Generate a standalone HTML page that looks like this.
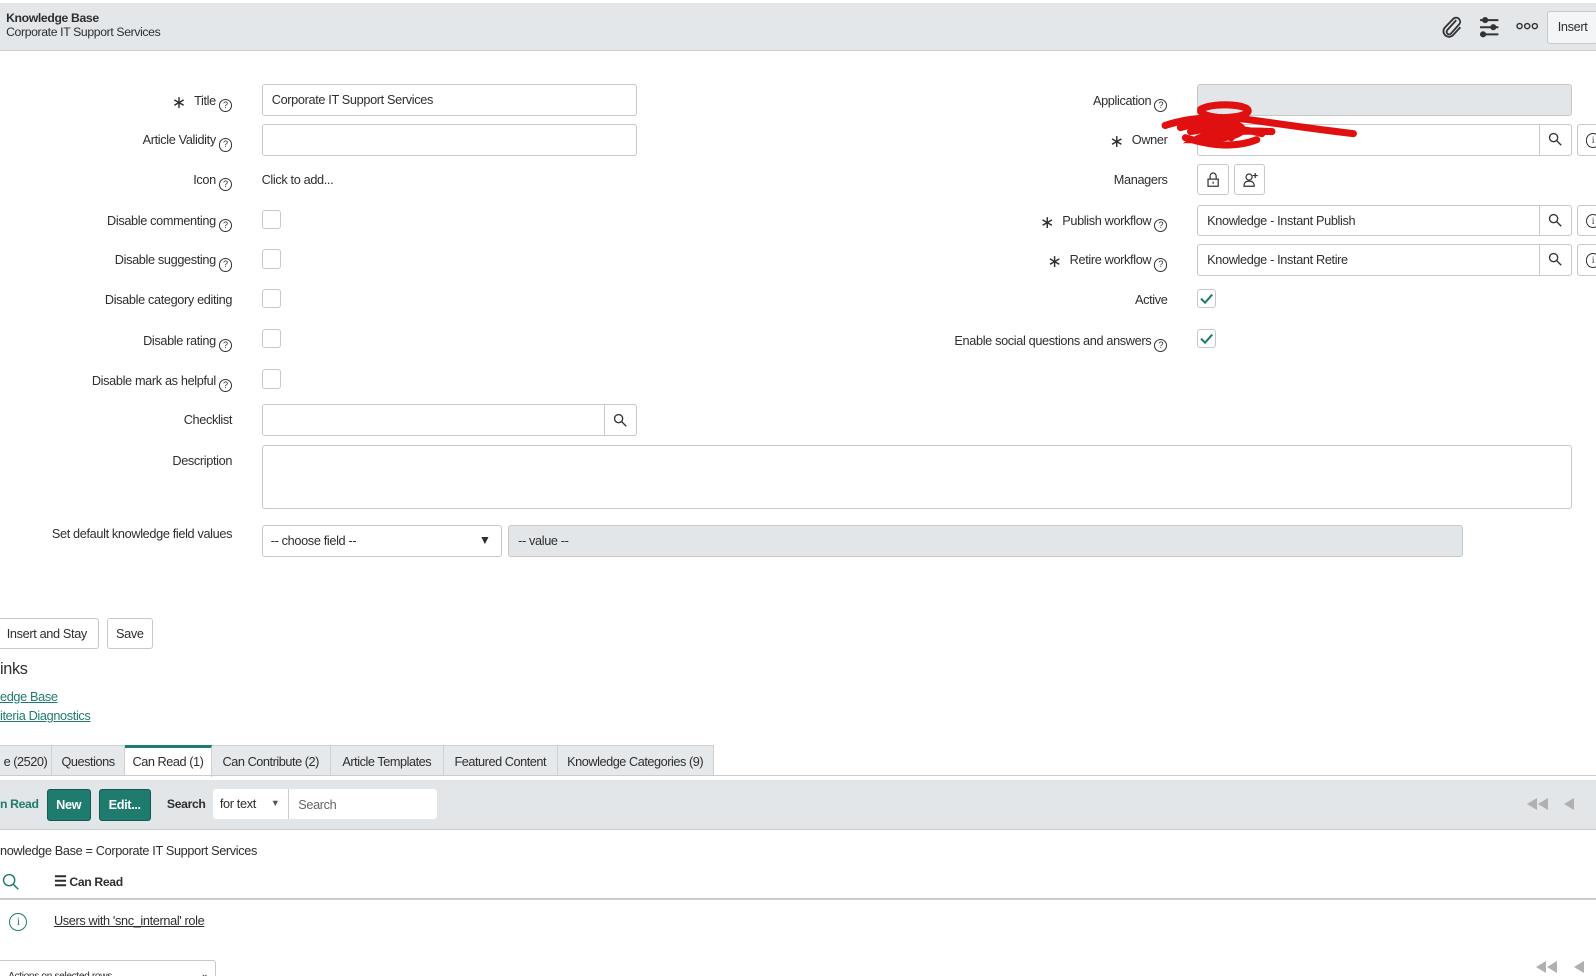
<!DOCTYPE html>
<html><head><meta charset="utf-8"><style>
html,body{margin:0;padding:0;background:#fff;overflow:hidden}
body{width:1568px;height:959px;zoom:1.01786;position:relative;font-family:"Liberation Sans",sans-serif;font-size:12.5px;letter-spacing:-0.35px;color:#2e2e2e}
.a{position:absolute}
.lbl{position:absolute;right:1340px;white-space:nowrap;text-align:right}
.rl{position:absolute;right:421px;white-space:nowrap;text-align:right}
.q{display:inline-block;width:11px;height:11px;border:1px solid #333;border-radius:50%;font-size:9px;line-height:11px;text-align:center;margin-left:3px;vertical-align:-3px;letter-spacing:0}
.inp{position:absolute;border:1px solid #c8c8c8;border-radius:3px;background:#fff;box-sizing:border-box;padding-left:9px;line-height:29px}
.cb{position:absolute;width:19px;height:19px;border:1px solid #c8c8c8;border-radius:3px;box-sizing:border-box;background:#fff}
.star{font-size:17px;margin-right:8px;vertical-align:-3px;font-family:"DejaVu Sans",sans-serif}
.btn{position:absolute;border:1px solid #c8c8c8;border-radius:3px;background:#fff;box-sizing:border-box;text-align:center}
.tab{position:absolute;top:732px;height:29px;line-height:31px;background:#e6e9eb;border-right:1px solid #d0d0d0;border-top:1px solid #d0d0d0;box-sizing:border-box;text-align:center;white-space:nowrap;font-size:12.5px;letter-spacing:-0.45px}
.teal{background:#1f7b6e;color:#fff;font-weight:bold;border-radius:3px;border:1px solid #14594f;box-sizing:border-box;text-align:center;line-height:29px}
.ib{position:absolute;width:12px;height:12px;border:1px solid #333;border-radius:50%;font-size:9px;text-align:center;line-height:12px;font-family:"Liberation Serif",serif}
.tri{position:absolute;width:0;height:0;border-top:6px solid transparent;border-bottom:6px solid transparent;border-right:10px solid #b0b0b0}
</style></head><body>
<div class="a" style="left:0;top:3px;width:1568px;height:46px;background:#e4e7ea;border-bottom:1px solid #c9cbcd"></div>
<div class="a" style="left:6px;top:11px;font-weight:bold;font-size:12px">Knowledge Base</div>
<div class="a" style="left:6px;top:25px;font-size:12px">Corporate IT Support Services</div>
<svg class="a" style="left:1415px;top:15px" width="24" height="24" viewBox="0 0 24 24"><path d="M16 5 L7 15 a2.5 2.5 0 0 0 3.5 3.5 L19 9 a4 4 0 0 0-5.6-5.6 L5 12 a5.5 5.5 0 0 0 7.8 7.8 L20 12" fill="none" stroke="#333" stroke-width="1.8"/></svg>
<svg class="a" style="left:1451px;top:15px" width="24" height="24" viewBox="0 0 24 24" stroke="#333" stroke-width="2"><path d="M3 5H21M3 12H21M3 19H21"/><circle cx="8" cy="5" r="2" fill="#333"/><circle cx="16" cy="12" r="2" fill="#333"/><circle cx="6" cy="19" r="2" fill="#333"/></svg>
<svg class="a" style="left:1489px;top:22px" width="22" height="8" viewBox="0 0 22 8" fill="none" stroke="#333" stroke-width="1.4"><circle cx="3.5" cy="4" r="2.5"/><circle cx="11" cy="4" r="2.5"/><circle cx="18.5" cy="4" r="2.5"/></svg>
<div class="btn" style="left:1520px;top:11px;width:50px;height:32px;line-height:30px;background:#f4f5f6">Insert</div>

<div class="lbl" style="top:91px"><span class="star">∗</span>Title<span class="q">?</span></div>
<div class="inp" style="left:257px;top:83px;width:369px;height:31px">Corporate IT Support Services</div>
<div class="lbl" style="top:130px">Article Validity<span class="q">?</span></div>
<div class="inp" style="left:257px;top:122px;width:369px;height:31px"></div>
<div class="lbl" style="top:169px">Icon<span class="q">?</span></div>
<div class="a" style="left:257px;top:169px">Click to add...</div>
<div class="lbl" style="top:209px">Disable commenting<span class="q">?</span></div>
<div class="cb" style="left:257px;top:206px"></div>
<div class="lbl" style="top:248px">Disable suggesting<span class="q">?</span></div>
<div class="cb" style="left:257px;top:245px"></div>
<div class="lbl" style="top:287px">Disable category editing</div>
<div class="cb" style="left:257px;top:284px"></div>
<div class="lbl" style="top:327px">Disable rating<span class="q">?</span></div>
<div class="cb" style="left:257px;top:323px"></div>
<div class="lbl" style="top:366px">Disable mark as helpful<span class="q">?</span></div>
<div class="cb" style="left:257px;top:363px"></div>
<div class="lbl" style="top:405px">Checklist</div>
<div class="inp" style="left:257px;top:397px;width:369px;height:31px"></div>
<div class="a" style="left:593px;top:398px;width:1px;height:29px;background:#c8c8c8"></div>
<svg class="a" style="left:602px;top:406px" width="14" height="14" viewBox="0 0 14 14" fill="none" stroke="#333" stroke-width="1.3"><circle cx="5.5" cy="5.5" r="4"/><path d="M8.5 8.5L13 13"/></svg>
<div class="lbl" style="top:445px">Description</div>
<div class="inp" style="left:257px;top:437px;width:1287px;height:63px"></div>
<div class="lbl" style="top:517px">Set default knowledge field values</div>
<div class="inp" style="left:257px;top:516px;width:236px;height:31px;padding-left:8px">-- choose field --<span style="position:absolute;right:10px;font-size:12px">▼</span></div>
<div class="inp" style="left:499px;top:516px;width:938px;height:31px;background:#e3e6e8">-- value --</div>

<div class="rl" style="top:91px">Application<span class="q">?</span></div>
<div class="inp" style="left:1176px;top:83px;width:368px;height:31px;background:#e3e6e8"></div>
<div class="rl" style="top:130px"><span class="star">∗</span>Owner</div>
<div class="inp" style="left:1176px;top:122px;width:368px;height:31px"></div>
<div class="a" style="left:1512px;top:123px;width:1px;height:29px;background:#c8c8c8"></div>
<div class="rl" style="top:169px">Managers</div>
<div class="btn" style="left:1176px;top:161px;width:31px;height:31px"></div>
<div class="btn" style="left:1212px;top:161px;width:31px;height:31px"></div>
<svg class="a" style="left:1185px;top:169px" width="14" height="15" viewBox="0 0 14 15" fill="none" stroke="#333" stroke-width="1.2"><rect x="2" y="7" width="10" height="7"/><path d="M4 7V4a3 3 0 0 1 6 0v3M7 9.5v2"/></svg>
<svg class="a" style="left:1221px;top:169px" width="15" height="15" viewBox="0 0 15 15" fill="none" stroke="#333" stroke-width="1.2"><circle cx="6" cy="5" r="3"/><path d="M1 14c0-4 2-5 5-5s5 1 5 5zM12 1v5M9.5 3.5h5"/></svg>
<div class="rl" style="top:209px"><span class="star">∗</span>Publish workflow<span class="q">?</span></div>
<div class="inp" style="left:1176px;top:201px;width:368px;height:31px">Knowledge - Instant Publish</div>
<div class="a" style="left:1512px;top:202px;width:1px;height:29px;background:#c8c8c8"></div>
<div class="rl" style="top:248px"><span class="star">∗</span>Retire workflow<span class="q">?</span></div>
<div class="inp" style="left:1176px;top:240px;width:368px;height:31px">Knowledge - Instant Retire</div>
<div class="a" style="left:1512px;top:241px;width:1px;height:29px;background:#c8c8c8"></div>
<svg class="a" style="left:1521px;top:130px" width="14" height="14" viewBox="0 0 14 14" fill="none" stroke="#333" stroke-width="1.3"><circle cx="5.5" cy="5.5" r="4"/><path d="M8.5 8.5L13 13"/></svg>
<svg class="a" style="left:1521px;top:209px" width="14" height="14" viewBox="0 0 14 14" fill="none" stroke="#333" stroke-width="1.3"><circle cx="5.5" cy="5.5" r="4"/><path d="M8.5 8.5L13 13"/></svg>
<svg class="a" style="left:1521px;top:248px" width="14" height="14" viewBox="0 0 14 14" fill="none" stroke="#333" stroke-width="1.3"><circle cx="5.5" cy="5.5" r="4"/><path d="M8.5 8.5L13 13"/></svg>
<div class="btn" style="left:1549px;top:122px;width:30px;height:31px"></div>
<div class="btn" style="left:1549px;top:201px;width:30px;height:31px"></div>
<div class="btn" style="left:1549px;top:240px;width:30px;height:31px"></div>
<div class="ib" style="left:1558px;top:131px">i</div>
<div class="ib" style="left:1558px;top:210px">i</div>
<div class="ib" style="left:1558px;top:249px">i</div>
<div class="rl" style="top:287px">Active</div>
<div class="cb" style="left:1176px;top:284px"></div>
<svg class="a" style="left:1179px;top:288px" width="13" height="11" viewBox="0 0 13 11"><path d="M1 5.5l4 4L12 1.5" fill="none" stroke="#1f7b6e" stroke-width="2"/></svg>
<div class="rl" style="top:327px">Enable social questions and answers<span class="q">?</span></div>
<div class="cb" style="left:1176px;top:323px"></div>
<svg class="a" style="left:1179px;top:327px" width="13" height="11" viewBox="0 0 13 11"><path d="M1 5.5l4 4L12 1.5" fill="none" stroke="#1f7b6e" stroke-width="2"/></svg>
<svg class="a" style="left:1140px;top:95px" width="200" height="60" viewBox="0 0 200 60"><path d="M40 12c15-8 55-4 45 4c-10 6-40 6-45-2M5 28c30-10 60-8 80-6c30 4 70 10 105 14M20 30c20-6 50-8 60 0c5 6-15 12-45 12c10-6 40-10 75-8M25 40c25 8 50 10 70 2M40 22l20 18M55 20l15 20M30 34c20-4 50-4 70 2" fill="none" stroke="#e01010" stroke-width="7" stroke-linecap="round"/></svg>

<div class="btn" style="left:-5px;top:607px;width:102px;height:31px;line-height:29px">Insert and Stay</div>
<div class="btn" style="left:105px;top:607px;width:45px;height:31px;line-height:29px">Save</div>
<div class="a" style="left:0;top:648px;font-size:16px">inks</div>
<div class="a" style="left:0;top:677px;color:#1f7b6e;text-decoration:underline">edge Base</div>
<div class="a" style="left:0;top:696px;color:#1f7b6e;text-decoration:underline">iteria Diagnostics</div>

<div class="tab" style="left:0;width:51px">e (2520)</div>
<div class="tab" style="left:51px;width:72px">Questions</div>
<div class="tab" style="left:123px;width:85px;background:#fff;border-top:3px solid #1f7b6e;line-height:28px;height:31px">Can Read (1)</div>
<div class="tab" style="left:208px;width:117px">Can Contribute (2)</div>
<div class="tab" style="left:325px;width:111px">Article Templates</div>
<div class="tab" style="left:436px;width:112px">Featured Content</div>
<div class="tab" style="left:548px;width:153px">Knowledge Categories (9)</div>
<div class="a" style="left:0;top:761px;width:1568px;height:1px;background:#ccc"></div>
<div class="a" style="left:0;top:766px;width:1568px;height:48px;background:#e3e6e8;border-bottom:1px solid #ccc"></div>
<div class="a" style="left:0;top:783px;color:#1f7b6e;font-weight:bold;font-size:12px">n Read</div>
<div class="a teal" style="left:46px;top:775px;width:43px;height:32px">New</div>
<div class="a teal" style="left:97px;top:775px;width:51px;height:32px">Edit...</div>
<div class="a" style="left:164px;top:783px;font-weight:bold;font-size:12px">Search</div>
<div class="a" style="left:209px;top:775px;width:220px;height:30px;background:#fff;border-radius:3px"></div>
<div class="a" style="left:216px;top:782px">for text</div>
<div class="a" style="left:266px;top:784px;font-size:9px;color:#555">▼</div>
<div class="a" style="left:283px;top:775px;width:1px;height:30px;background:#ccc"></div>
<div class="a" style="left:293px;top:783px;color:#666">Search</div>
<div class="tri" style="left:1500px;top:784px"></div><div class="tri" style="left:1511px;top:784px"></div><div class="tri" style="left:1537px;top:784px"></div>
<div class="a" style="left:0;top:828px">nowledge Base = Corporate IT Support Services</div>
<svg class="a" style="left:2px;top:858px" width="18" height="18" viewBox="0 0 18 18" fill="none" stroke="#1f7b6e" stroke-width="1.4"><circle cx="7" cy="7" r="5.5"/><path d="M11 11l5 5"/></svg>
<div class="a" style="left:53px;top:859px;font-weight:bold;font-size:12px"><span style="font-size:14px">☰</span> Can Read</div>
<div class="a" style="left:0;top:882px;width:1568px;height:2px;background:#ccc"></div>
<div class="a" style="left:9px;top:897px;width:16px;height:16px;border:1.3px solid #1f7b6e;border-radius:50%;color:#1f7b6e;font-size:11px;text-align:center;line-height:16px;font-family:'Liberation Serif',serif">i</div>
<div class="a" style="left:53px;top:897px;text-decoration:underline">Users with 'snc_internal' role</div>
<div class="a" style="left:-5px;top:943px;width:217px;height:30px;border:1px solid #c8c8c8;border-radius:3px;box-sizing:border-box;font-size:10px;padding:10px 0 0 12px;overflow:hidden">Actions on selected rows...<span style="position:absolute;right:6px;top:8px">⌄</span></div>
<div class="tri" style="left:1509px;top:944px"></div><div class="tri" style="left:1520px;top:944px"></div><div class="tri" style="left:1546px;top:944px"></div>
</body></html>
